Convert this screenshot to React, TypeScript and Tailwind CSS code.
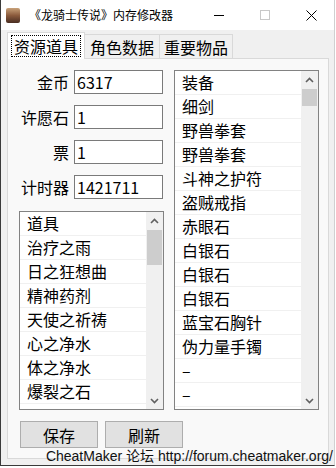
import React from "react";

const leftItems = ["道具", "治疗之雨", "日之狂想曲", "精神药剂", "天使之祈祷", "心之净水", "体之净水", "爆裂之石"];
const rightItems = [
  "装备",
  "细剑",
  "野兽拳套",
  "野兽拳套",
  "斗神之护符",
  "盗贼戒指",
  "赤眼石",
  "白银石",
  "白银石",
  "白银石",
  "蓝宝石胸针",
  "伪力量手镯",
  "–",
  "–",
];
const fields = [
  { label: "金币", value: "6317" },
  { label: "许愿石", value: "1" },
  { label: "票", value: "1" },
  { label: "计时器", value: "1421711" },
];

const cjk = { fontFamily: '"Noto Sans CJK SC", "Noto Sans", sans-serif' };

const Chevron = ({ up }: { up?: boolean }) => (
  <svg width="9" height="6" viewBox="0 0 9 6">
    <path d={up ? "M1 5 L4.5 1.5 L8 5" : "M1 1 L4.5 4.5 L8 1"} fill="none" stroke="#606060" strokeWidth="1.6" />
  </svg>
);

const ListBox = ({ items, h, thumbTop, thumbH }: { items: string[]; h: string; thumbTop: string; thumbH: string }) => (
  <div className={`flex border border-[#828282] bg-white ${h} w-[145px] overflow-hidden`}>
    <div className="flex-1 flex flex-col overflow-hidden">
      {items.map((t, i) => (
        <div key={i} className="h-[24px] shrink-0 border-b border-[#f0f0f0] pl-[7px] text-[16px] leading-[23px] text-black">
          {t}
        </div>
      ))}
    </div>
    <div className="w-[17px] bg-[#f0f0f0] flex flex-col items-center">
      <div className="h-[17px] flex items-center justify-center">
        <Chevron up />
      </div>
      <div className={`w-[15px] bg-[#cdcdcd] ${thumbTop} ${thumbH}`} />
      <div className="flex-1" />
      <div className="h-[17px] flex items-center justify-center">
        <Chevron />
      </div>
    </div>
  </div>
);

export default function App() {
  return (
    <div className="w-[336px] h-[468px] bg-white" style={cjk}>
      <div className="w-[335px] h-[466px] flex flex-col border-l border-b border-r border-l-[#3a3a3a] border-b-[#3a3a3a] border-r-[#d0d0d0]">
        <div className="h-[30px] flex items-center bg-white shrink-0">
          <div className="ml-[5px] w-[14px] h-[15px] rounded-[2px] bg-gradient-to-b from-[#c9a27a] via-[#8a5a3c] to-[#4a2e22]" />
          <div className="ml-[9px] text-[12px] text-black leading-none">《龙骑士传说》内存修改器</div>
          <div className="flex-1" />
          <div className="w-[46px] flex justify-center">
            <div className="w-[10px] h-px bg-black" />
          </div>
          <div className="w-[46px] flex justify-center">
            <div className="w-[10px] h-[10px] border border-[#c8c8c8]" />
          </div>
          <div className="w-[46px] flex justify-center">
            <svg width="11" height="11" viewBox="0 0 11 11">
              <path d="M0.5 0.5 L10.5 10.5 M10.5 0.5 L0.5 10.5" stroke="#000" strokeWidth="1" />
            </svg>
          </div>
        </div>
        <div className="flex-1 bg-[#f0f0f0] pl-[6px] pr-[5px] flex flex-col relative">
          <div className="h-[28px] flex items-end shrink-0">
            <div className="h-[27px] w-[78px] bg-white border border-b-0 border-[#d9d9d9] -mb-px relative z-10 flex items-center justify-center">
              <div className="border border-dotted border-black px-[2px] text-[16px] leading-[20px] text-black">资源道具</div>
            </div>
            <div className="h-[24px] w-[75px] bg-[#f0f0f0] border border-l-0 border-b-0 border-[#d9d9d9] flex items-center justify-center text-[16px] text-black">
              角色数据
            </div>
            <div className="h-[24px] w-[73px] bg-[#f0f0f0] border border-l-0 border-b-0 border-[#d9d9d9] flex items-center justify-center text-[16px] text-black">
              重要物品
            </div>
          </div>
          <div className="h-[401px] border border-[#d9d9d9] bg-[#f9f9f9] pt-[11px] pl-[11px] flex flex-col">
            <div className="flex gap-[10px]">
              <div className="flex flex-col">
                <div className="flex flex-col gap-[11px]">
                  {fields.map((f) => (
                    <div key={f.label} className="flex items-center h-[24px]">
                      <div className="w-[50px] text-right text-[16px] text-black whitespace-nowrap">{f.label}</div>
                      <div className="ml-[5px] w-[89px] h-[24px] border border-[#7a7a7a] bg-white pl-[2px] text-[16px] leading-[22px] text-black">
                        {f.value}
                      </div>
                    </div>
                  ))}
                </div>
                <div className="mt-[12px]">
                  <ListBox items={leftItems} h="h-[199px]" thumbTop="mt-[1px]" thumbH="h-[35px]" />
                </div>
              </div>
              <ListBox items={rightItems} h="h-[340px]" thumbTop="mt-[1px]" thumbH="h-[17px]" />
            </div>
            <div className="mt-[11px] flex gap-[7px] pl-[1px]">
              <div className="w-[78px] h-[27px] bg-[#e1e1e1] border border-[#adadad] flex items-center justify-center text-[16px] text-black">保存</div>
              <div className="w-[78px] h-[27px] bg-[#e1e1e1] border border-[#adadad] flex items-center justify-center text-[16px] text-black">刷新</div>
            </div>
          </div>
          <div className="absolute right-[1px] bottom-[1px] text-[14px] leading-[15px] text-[#111] whitespace-nowrap" style={{ fontFamily: '"Liberation Sans", "Noto Sans CJK SC", sans-serif' }}>
            CheatMaker 论坛 http://forum.cheatmaker.org/
          </div>
        </div>
      </div>
    </div>
  );
}
